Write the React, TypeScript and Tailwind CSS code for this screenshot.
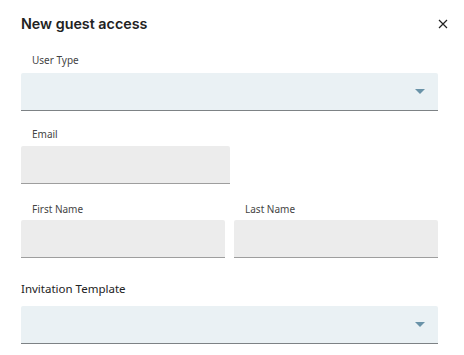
export default function App() {
  const label = "block pl-[11px] text-[10px] leading-[14px] text-[#444]";
  const sel = "relative h-[38px] rounded-t-[2px] border-b border-[#7d8285] bg-[#eaf1f4]";
  const inp = "h-[38px] rounded-t-[2px] border-b border-[#9e9e9e] bg-[#ececec]";
  const Caret = () => (
    <svg className="absolute right-[13px] top-[16px]" width="10" height="5" viewBox="0 0 10 5">
      <path d="M0 0h10L5 5z" fill="#6a93a8" />
    </svg>
  );
  return (
    <main className="min-h-screen bg-white pl-[21px] pr-[26px] font-['Noto_Sans',sans-serif]">
      <header className="flex h-[43px] items-center justify-between pt-[5px]">
        <h1 className="font-['Inter',sans-serif] text-[14.3px] font-semibold text-[#222]">New guest access</h1>
        <svg className="mr-[-10px]" width="10" height="10" viewBox="0 0 10 10">
          <path d="M1 1l8 8M9 1l-8 8" stroke="#222" strokeWidth="1.2" />
        </svg>
      </header>

      <div className="mt-[10px]">
        <span className={label}>User Type</span>
        <div className={`mt-[6px] ${sel}`}>
          <Caret />
        </div>
      </div>

      <div className="mt-[16px] w-[209px]">
        <span className={label}>Email</span>
        <div className={`mt-[5px] ${inp}`} />
      </div>

      <div className="mt-[18px] grid grid-cols-2 gap-[9px]">
        <div>
          <span className={label}>First Name</span>
          <div className={`mt-[4px] ${inp}`} />
        </div>
        <div>
          <span className={label}>Last Name</span>
          <div className={`mt-[4px] ${inp}`} />
        </div>
      </div>

      <div className="mt-[23px]">
        <span className="block text-[11.5px] leading-[16px] text-[#222]">Invitation Template</span>
        <div className={`mt-[9px] ${sel}`}>
          <Caret />
        </div>
      </div>
    </main>
  );
}
